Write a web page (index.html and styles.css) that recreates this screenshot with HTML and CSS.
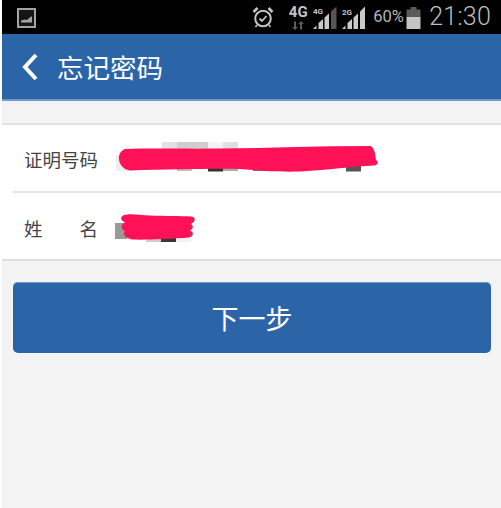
FILE: index.html
```
<!DOCTYPE html>
<html lang="zh">
<head>
<meta charset="utf-8">
<title>忘记密码</title>
<link rel="stylesheet" href="styles.css">
</head>
<body>
<div class="app">
  <div class="status">
    <svg class="ic-image" width="19" height="20" viewBox="0 0 19 20"><rect x="1" y="1" width="17" height="18" fill="#151515" stroke="#a3a3a3" stroke-width="2"/><path d="M4 14.500 L4 12.500 L8 11.500 L10 12 L14 8.500 L15 8.500 L15 14.500 Z" fill="#a3a3a3"/></svg>
    <div class="status-right">
      <svg class="ic-alarm" width="22" height="22" viewBox="0 0 22 22" fill="none" stroke="#c4c4c4"><circle cx="11" cy="12.500" r="7.800" stroke-width="2"/><path d="M7.500 12.500 L10 15 L14.500 10" stroke-width="1.800"/><path d="M1.500 6 L5.500 2 M20.500 6 L16.500 2" stroke-width="2.600"/><path d="M5 19 L3.500 21 M17 19 L18.500 21" stroke-width="1.600"/></svg>
      <div class="net">
        <span class="net-label">4G</span>
        <svg width="14" height="9" viewBox="0 0 14 9" fill="#5c5c5c"><path d="M3 0.500 L3 6 L1 6 L4 9 L7 6 L5 6 L5 0.500 Z"/><path d="M10 0 L7.400 3 L9 3 L9 8.500 L11 8.500 L11 3 L13 3 Z"/></svg>
      </div>
      <svg class="signal" width="24" height="24" viewBox="0 0 24 24"><text x="0" y="8" class="sig-text">4G</text><path d="M0 23 L3.500 19.500 L3.500 23 Z" fill="#c9c9c9"/><path d="M5.500 23 L5.500 17 L10 13 L10 23 Z" fill="#c9c9c9"/><path d="M11.500 23 L11.500 11.500 L16 7.500 L16 23 Z" fill="#c9c9c9"/><path d="M18 23 L18 5.500 L23.500 0.500 L23.500 23 Z" fill="#555"/></svg>
      <svg class="signal signal-2" width="24" height="24" viewBox="0 0 24 24"><text x="0" y="9" class="sig-text">2G</text><path d="M0 23 L3.500 19.500 L3.500 23 Z" fill="#c9c9c9"/><path d="M5.500 23 L5.500 17 L10 13 L10 23 Z" fill="#c9c9c9"/><path d="M11.500 23 L11.500 11.500 L16 7.500 L16 23 Z" fill="#c9c9c9"/><path d="M18 23 L18 5.500 L23 0.500 L23 23 Z" fill="#c9c9c9"/></svg>
      <span class="pct">60%</span>
      <svg class="battery" width="15" height="22" viewBox="0 0 15 22"><rect x="4.500" y="0" width="6" height="3" fill="#5a5a5a"/><rect x="0.500" y="2.500" width="14" height="8" fill="#5a5a5a"/><rect x="0.500" y="10" width="14" height="12" fill="#c4c4c4"/></svg>
      <span class="time">21:30</span>
    </div>
  </div>
  <header class="bar">
    <svg class="back" width="18" height="28" viewBox="0 0 18 28" fill="none" stroke="#fff" stroke-width="4"><path d="M15 2 L4 14 L15 26"/></svg>
    <h1 class="title">忘记密码</h1>
  </header>
  <main class="content">
    <section class="form">
      <div class="row">
        <span class="label">证明号码</span>
        <svg class="mask mask-id" width="270" height="36" viewBox="110 140 270 36">
          <g>
            <rect x="116" y="155" width="15" height="16" fill="#eee"/>
            <rect x="162" y="142" width="15" height="8" fill="#e2e2e2"/>
            <rect x="177" y="142" width="31" height="8" fill="#cfcfcf"/>
            <rect x="208" y="142" width="15" height="8" fill="#f3f3f3"/>
            <rect x="223" y="142" width="15" height="8" fill="#e0e0e0"/>
            <rect x="177" y="165" width="15" height="6" fill="#bdbdbd"/>
            <rect x="208" y="165" width="15" height="6.500" fill="#333"/>
            <rect x="223" y="165" width="15" height="6" fill="#aaa"/>
            <rect x="253" y="165" width="16" height="6" fill="#777"/>
            <rect x="346" y="165" width="15" height="6.500" fill="#555"/>
          </g>
          <path d="M125 149 C150 148 190 149 220 148.500 C270 148 320 146 370 146 C374 147 375 152 376 160 C379 162 378 165 374 165.500 C350 166.500 330 170 300 171.500 C280 172 262 171 240 169 C210 168.500 170 169.500 130 170.500 C122 169.500 118 162 119 156 C120 152 122 150 125 149 Z" fill="#ff1158"/>
        </svg>
      </div>
      <div class="row row-name">
        <span class="label label-name"><span>姓</span><span>名</span></span>
        <svg class="mask mask-name" width="90" height="36" viewBox="110 210 90 36">
          <rect x="115" y="223" width="12" height="16" fill="#999"/>
          <rect x="146" y="235" width="15" height="7" fill="#cfcfcf"/>
          <rect x="161" y="235" width="15" height="7" fill="#383838"/>
          <rect x="176" y="235" width="15" height="7" fill="#f2f2f2"/>
          <path d="M124 215 C130 213 140 215 150 215.500 C165 216 180 216 191 216.500 C196 217 196 221 191 224 C194 226 193 229 190 230.500 C194 232 194 236 189 237.500 C170 239 145 240 132 239.500 C125 238 122 234 125 231 C120 229 121 224 125 222.500 C120 220 120 217 124 215 Z" fill="#ff1158"/>
        </svg>
      </div>
    </section>
    <button class="next" type="button">下一步</button>
  </main>
</div>
</body>
</html>
```
FILE: styles.css
```
* { box-sizing: border-box; }
html, body { margin: 0; padding: 0; background: #fff; }
body { width: 501px; height: 508px; overflow: hidden; font-family: "Noto Sans CJK SC", "Noto Sans", sans-serif; }
.app { margin-left: 2px; height: 508px; display: flex; flex-direction: column; background: #f3f3f3; }

.status { height: 34px; flex: none; background: #000; display: flex; align-items: center; justify-content: space-between; padding: 0 10px 0 15px; }
.ic-image { margin-top: 2px; }
.status-right { display: flex; align-items: center; }
.ic-alarm { margin-right: 15px; }
.net { width: 18px; display: flex; flex-direction: column; align-items: center; margin-right: 6px; margin-top: 1px; }
.net-label { font: bold 15px/14px "Roboto", sans-serif; color: #c4c4c4; }
.net svg { margin-top: 2px; }
.signal { margin-right: 5px; margin-top: 1px; }
.signal-2 { margin-right: 7px; }
.sig-text { font: bold 8px "Roboto", sans-serif; fill: #c4c4c4; }
.pct { font: 16.500px/20px "Roboto", sans-serif; color: #b4b4b4; width: 33px; }
.battery { margin-right: 8px; margin-top: 1px; }
.time { font: 300 25px/30px "Roboto", sans-serif; color: #bdbdbd; letter-spacing: 0.2px; }

.bar { height: 67px; flex: none; background: #2b65a8; border-bottom: 2px solid #6e9acb; display: flex; align-items: center; padding: 1px 0 0 19px; }
.back { flex: none; }
.title { margin: 0 0 0 18px; font-size: 26.500px; font-weight: 400; line-height: 36px; color: #fff; }

.content { flex: 1; display: flex; flex-direction: column; padding-top: 22px; }
.form { background: #fff; border-top: 2px solid #e2e2e2; border-bottom: 2px solid #dedede; }
.row { position: relative; height: 66px; display: flex; align-items: center; padding: 2px 0 0 22px; }
.row-name { height: 68px; padding-top: 5px; }
.row-name::before { content: ""; position: absolute; left: 11px; right: 0; top: 0; height: 1.500px; background: #e4e4e4; }
.label { font-size: 18.500px; line-height: 24px; color: #444; width: 74px; white-space: nowrap; flex: none; }
.label-name { display: flex; justify-content: space-between; }
.mask { position: absolute; }
.mask-id { left: 108px; top: 15px; }
.mask-name { left: 108px; top: 19px; }

.next { margin: 21px 10px 0 11px; height: 71px; border: 0; border-radius: 5px; background: #2b65a8; color: #fff; font: 400 27px/36px "Noto Sans CJK SC", sans-serif; padding: 0; box-shadow: inset 0 1px 0 #6e9acb; }
```
